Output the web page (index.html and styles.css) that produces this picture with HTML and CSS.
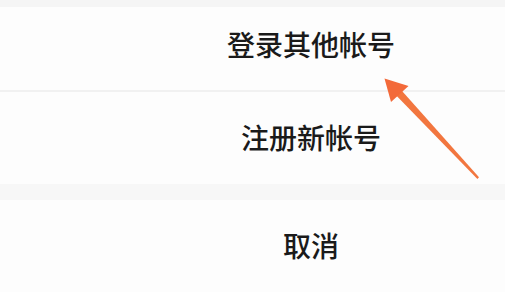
FILE: index.html
```html
<!DOCTYPE html>
<html lang="zh-CN">
<head>
<meta charset="utf-8">
<title>Action sheet</title>
<link rel="stylesheet" href="styles.css">
</head>
<body>
<div class="sheet">
  <div class="top-strip"></div>
  <div class="item item-first">登录其他帐号</div>
  <div class="divider"></div>
  <div class="item">注册新帐号</div>
  <div class="gap"></div>
  <div class="item">取消</div>
</div>
<svg class="arrow" width="505" height="292" viewBox="0 0 505 292" aria-hidden="true">
  <polygon points="395.3,94.5 400.7,89.5 479,177.3 477.4,178.9" fill="#f2763f"/>
  <polygon points="384.5,78.5 408.5,86 391,102" fill="#f36a3a"/>
</svg>
</body>
</html>
```
FILE: styles.css
```css
html, body {
  margin: 0;
  padding: 0;
}
body {
  width: 505px;
  height: 292px;
  overflow: hidden;
  background: #ffffff;
  position: relative;
  font-family: "Noto Sans CJK SC", "Noto Sans", sans-serif;
}
.sheet {
  width: 505px;
  display: flex;
  flex-direction: column;
}
.top-strip {
  height: 7px;
  background: #f5f5f5;
}
.item {
  height: 92px;
  box-sizing: border-box;
  padding-left: 117px;
  padding-bottom: 3px;
  display: flex;
  align-items: center;
  justify-content: center;
  font-size: 28px;
  font-weight: 500;
  color: #1a1a1a;
  background: #fdfdfd;
}
.item-first {
  height: 83px;
  padding-bottom: 10px;
}
.divider {
  height: 2px;
  background: #f1f1f1;
}
.gap {
  height: 16px;
  background: #f7f7f7;
}
.arrow {
  position: absolute;
  left: 0;
  top: 0;
}
```
